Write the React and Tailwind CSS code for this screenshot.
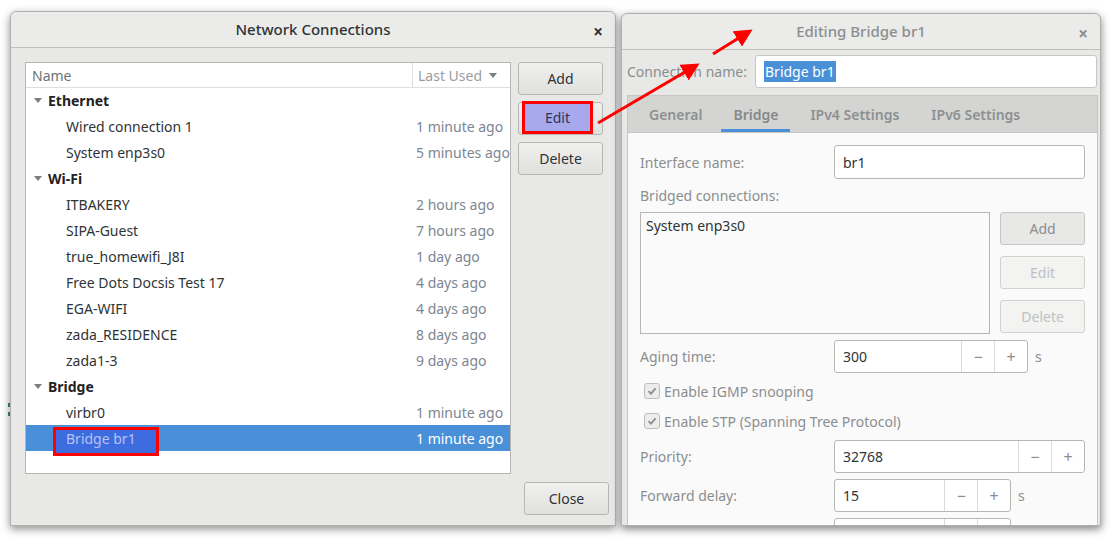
import React from 'react';

const font = { fontFamily: '"Noto Sans", "Open Sans", sans-serif' };

const rows = [
  { group: 'Ethernet' },
  { name: 'Wired connection 1', time: '1 minute ago' },
  { name: 'System enp3s0', time: '5 minutes ago' },
  { group: 'Wi-Fi' },
  { name: 'ITBAKERY', time: '2 hours ago' },
  { name: 'SIPA-Guest', time: '7 hours ago' },
  { name: 'true_homewifi_J8I', time: '1 day ago' },
  { name: 'Free Dots Docsis Test 17', time: '4 days ago' },
  { name: 'EGA-WIFI', time: '4 days ago' },
  { name: 'zada_RESIDENCE', time: '8 days ago' },
  { name: 'zada1-3', time: '9 days ago' },
  { group: 'Bridge' },
  { name: 'virbr0', time: '1 minute ago' },
  { name: 'Bridge br1', time: '1 minute ago', selected: true },
];

const Caret = () => (
  <svg width="10" height="10" viewBox="0 0 10 10" className="shrink-0">
    <path d="M1 3 L9 3 L5 8 Z" fill="#7b7e7f" />
  </svg>
);

const Button = ({ children, className = '' }) => (
  <div
    className={`flex items-center justify-center rounded-[3px] border border-[#b6b6b3] bg-gradient-to-b from-[#f0f0ef] to-[#e0e0df] text-[#2e3436] text-[14px] ${className}`}
  >
    {children}
  </div>
);

const GhostButton = ({ children, muted }) => (
  <div
    className={`h-[33px] flex items-center justify-center rounded-[3px] border text-[14px] ${
      muted
        ? 'border-[#d0d0ce] bg-[#f3f3f2] text-[#c0c2c2]'
        : 'border-[#c6c6c4] bg-[#e8e8e7] text-[#8b8e8f]'
    }`}
  >
    {children}
  </div>
);

const TitleBar = ({ title, dim }) => (
  <div className="h-[36px] shrink-0 flex items-center relative bg-[#ebebea] border-b border-[#bfbfbc] rounded-t-[6px]">
    <div className={`flex-1 text-center text-[15px] font-medium ${dim ? 'text-[#8b8e8f]' : 'text-[#2e3436]'}`}>
      {title}
    </div>
    <div className={`absolute right-[12px] top-[7px] text-[17px] font-bold ${dim ? 'text-[#8b8e8f]' : 'text-[#2e3436]'}`}>
      ×
    </div>
  </div>
);

const Spin = ({ value, width, entry, unit, bare }) => (
  <div className="flex items-center">
    <div className={`h-[33px] flex rounded-[3px] border border-[#b6b6b3] bg-white ${width}`}>
      <div className={`flex items-center pl-[8px] text-[14px] text-[#2e3436] ${entry}`}>{value}</div>
      <div className="w-[33px] flex items-center justify-center border-l border-[#dadad8] text-[#8b8e8f] text-[16px]">{bare ? '' : '−'}</div>
      <div className="w-[33px] flex items-center justify-center border-l border-[#dadad8] text-[#8b8e8f] text-[16px]">{bare ? '' : '+'}</div>
    </div>
    {unit && <span className="ml-[7px] text-[14px] text-[#8b8e8f]">s</span>}
  </div>
);

const Check = ({ label }) => (
  <div className="h-[30px] flex items-center pl-[4px] gap-[4px]">
    <div className="w-[16px] h-[16px] rounded-[3px] border border-[#bdbdbb] bg-[#ececeb] flex items-center justify-center">
      <svg width="12" height="12" viewBox="0 0 12 12">
        <path d="M2.5 6.2 L5 8.6 L9.6 3.4" stroke="#8b8e8f" strokeWidth="1.8" fill="none" />
      </svg>
    </div>
    <span className="text-[14px] text-[#8b8e8f]">{label}</span>
  </div>
);

function NetworkConnections() {
  return (
    <div className="absolute left-[10px] top-[11px] w-[606px] h-[515px] flex flex-col rounded-t-[6px] border border-[#b0b0ad] bg-[#e8e8e7] shadow-[0_3px_8px_rgba(0,0,0,0.45)]">
      <TitleBar title="Network Connections" />
      <div className="flex pl-[14px] pt-[14px] gap-[7px]">
        <div className="w-[486px] h-[412px] border border-[#b6b6b3] bg-white">
          <div className="h-[25px] flex border-b border-[#dedede] text-[14px]">
            <div className="w-[387px] pl-[6px] flex items-center text-[#6e7273] border-r border-[#dedede]">Name</div>
            <div className="flex-1 pl-[5px] flex items-center gap-[6px] text-[#9a9d9e]">
              Last Used
              <Caret />
            </div>
          </div>
          <div className="-mt-[1px]">
            {rows.map((r, i) =>
              r.group ? (
                <div key={i} className="h-[26px] flex items-center pl-[7px] gap-[5px]">
                  <Caret />
                  <span className="text-[14px] font-bold text-[#1f2324]">{r.group}</span>
                </div>
              ) : (
                <div
                  key={i}
                  className={`relative h-[26px] flex items-center text-[14px] ${r.selected ? 'bg-[#4a90d9]' : ''}`}
                >
                  <div className="w-[390px] pl-[40px]">
                    <span className={r.selected ? 'relative z-10 text-[#b7c2f2]' : 'text-[#2e3436]'}>{r.name}</span>
                  </div>
                  <div className={r.selected ? 'text-white' : 'text-[#7d8691]'}>{r.time}</div>
                  {r.selected && (
                    <div className="absolute left-[27px] top-[2px] w-[106px] h-[29px] border-[3px] border-[#ff0000] bg-[#3c6ce0]" />
                  )}
                </div>
              )
            )}
          </div>
        </div>
        <div className="w-[85px] flex flex-col gap-[7px]">
          <Button className="h-[33px]">Add</Button>
          <div className="relative">
            <Button className="h-[33px]" />
            <div className="absolute left-[4px] top-[-1px] w-[71px] h-[33px] border-[3px] border-[#ff0000] bg-[#a8a8ec] flex items-center justify-center text-[14px] text-[#2e3456]">
              Edit
            </div>
          </div>
          <Button className="h-[33px]">Delete</Button>
        </div>
      </div>
      <div className="flex justify-end pr-[6px] pt-[8px]">
        <Button className="w-[85px] h-[33px]">Close</Button>
      </div>
    </div>
  );
}

function EditingBridge() {
  return (
    <div className="absolute left-[621px] top-[13px] w-[480px] h-[513px] flex flex-col overflow-hidden rounded-t-[6px] border border-[#b0b0ad] bg-[#e8e8e7] shadow-[0_3px_9px_rgba(0,0,0,0.5)]">
      <TitleBar title="Editing Bridge br1" dim />
      <div className="flex items-center h-[33px] mt-[5px] pl-[5px] pr-[3px]">
        <span className="w-[128px] text-[14px] text-[#8b8e8f]">Connection name:</span>
        <div className="flex-1 h-[33px] flex items-center pl-[8px] rounded-[3px] border border-[#c6c6c4] bg-white">
          <span className="bg-[#4a90d9] text-white text-[14px] leading-[21px] px-[1px]">Bridge br1</span>
        </div>
      </div>
      <div className="flex-1 ml-[5px] mr-[2px] mt-[7px] flex flex-col border border-[#c6c6c4] bg-[#fafafa]">
        <div className="h-[37px] shrink-0 flex bg-[#d4d4d2] border-b border-[#c6c6c4] text-[14px] font-semibold text-[#8d9091] pl-[8px]">
          <div className="pl-[13px] pr-[19px] flex items-center">General</div>
          <div className="px-[12px] flex items-center border-b-[3px] border-[#4a90d9] pt-[3px] text-[#85898a]">Bridge</div>
          <div className="pl-[20px] pr-[32px] flex items-center">IPv4 Settings</div>
          <div className="flex items-center">IPv6 Settings</div>
        </div>
        <div className="px-[12px] pt-[12px] text-[14px]">
          <div className="flex items-center">
            <span className="w-[194px] text-[#8b8e8f]">Interface name:</span>
            <div className="w-[251px] h-[34px] flex items-center pl-[8px] rounded-[3px] border border-[#b6b6b3] bg-white text-[#2e3436]">br1</div>
          </div>
          <div className="h-[33px] flex items-center text-[#8b8e8f]">Bridged connections:</div>
          <div className="flex gap-[10px]">
            <div className="w-[351px] h-[122px] border border-[#b6b6b3] bg-[#fafafa] pl-[5px] pt-[2px] text-[#2e3436]">System enp3s0</div>
            <div className="w-[85px] flex flex-col gap-[11px]">
              <GhostButton>Add</GhostButton>
              <GhostButton muted>Edit</GhostButton>
              <GhostButton muted>Delete</GhostButton>
            </div>
          </div>
          <div className="flex items-center mt-[6px]">
            <span className="w-[194px] text-[#8b8e8f]">Aging time:</span>
            <Spin value="300" width="w-[194px]" entry="w-[127px]" unit />
          </div>
          <div className="mt-[3px]">
            <Check label="Enable IGMP snooping" />
            <Check label="Enable STP (Spanning Tree Protocol)" />
          </div>
          <div className="flex items-center mt-[4px]">
            <span className="w-[194px] text-[#8b8e8f]">Priority:</span>
            <Spin value="32768" width="w-[251px]" entry="w-[184px]" />
          </div>
          <div className="flex items-center mt-[6px]">
            <span className="w-[194px] text-[#8b8e8f]">Forward delay:</span>
            <Spin value="15" width="w-[177px]" entry="w-[110px]" unit />
          </div>
          <div className="flex items-center mt-[6px]">
            <span className="w-[194px]" />
            <Spin value="" width="w-[177px]" entry="w-[110px]" bare />
          </div>
        </div>
      </div>
    </div>
  );
}

export default function App() {
  return (
    <div className="relative w-[1117px] h-[542px] overflow-hidden bg-white" style={font}>
      <div className="absolute left-[8px] top-[403px] w-[3px] h-[4px] bg-[#2f8a8a]" />
      <div className="absolute left-[8px] top-[412px] w-[3px] h-[4px] bg-[#2f8a8a]" />
      <NetworkConnections />
      <EditingBridge />
      <svg className="absolute inset-0 pointer-events-none" width="1117" height="542">
        <defs>
          <marker id="head" markerWidth="6" markerHeight="6" refX="5" refY="3" orient="auto" markerUnits="strokeWidth">
            <path d="M0 0 L6 3 L0 6 Z" fill="#ff0000" />
          </marker>
        </defs>
        <line x1="598" y1="123" x2="697" y2="65" stroke="#ff0000" strokeWidth="3" markerEnd="url(#head)" />
        <line x1="713" y1="54" x2="750" y2="31" stroke="#ff0000" strokeWidth="3" markerEnd="url(#head)" />
      </svg>
    </div>
  );
}
